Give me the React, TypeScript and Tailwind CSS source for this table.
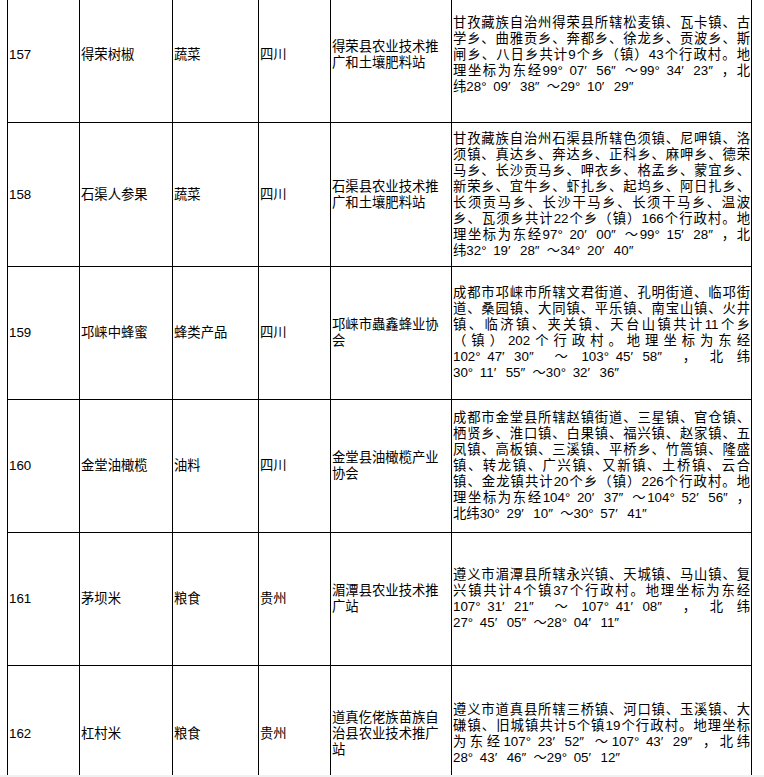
type Row = {
  no: string
  name: string
  kind: string
  prov: string
  org: string[]
  desc: string[]
  h: string
}

const ROWS: Row[] = [
  {
    no: '157', name: '得荣树椒', kind: '蔬菜', prov: '四川', h: 'h-[135px]',
    org: ['得荣县农业技术推', '广和土壤肥料站'],
    desc: [
      '甘孜藏族自治州得荣县所辖松麦镇、瓦卡镇、古',
      '学乡、曲雅贡乡、奔都乡、徐龙乡、贡波乡、斯',
      '闸乡、八日乡共计9个乡（镇）43个行政村。地',
      '理坐标为东经99°07′56″～99°34′23″，北',
      '纬28°09′38″～29°10′29″',
    ],
  },
  {
    no: '158', name: '石渠人参果', kind: '蔬菜', prov: '四川', h: 'h-[144px]',
    org: ['石渠县农业技术推', '广和土壤肥料站'],
    desc: [
      '甘孜藏族自治州石渠县所辖色须镇、尼呷镇、洛',
      '须镇、真达乡、奔达乡、正科乡、麻呷乡、德荣',
      '马乡、长沙贡马乡、呷衣乡、格孟乡、蒙宜乡、',
      '新荣乡、宜牛乡、虾扎乡、起坞乡、阿日扎乡、',
      '长须贡马乡、长沙干马乡、长须干马乡、温波',
      '乡、瓦须乡共计22个乡（镇）166个行政村。地',
      '理坐标为东经97°20′00″～99°15′28″，北',
      '纬32°19′28″～34°20′40″',
    ],
  },
  {
    no: '159', name: '邛崃中蜂蜜', kind: '蜂类产品', prov: '四川', h: 'h-[133px]',
    org: ['邛崃市蟲鑫蜂业协', '会'],
    desc: [
      '成都市邛崃市所辖文君街道、孔明街道、临邛街',
      '道、桑园镇、大同镇、平乐镇、南宝山镇、火井',
      '镇、临济镇、夹关镇、天台山镇共计11个乡',
      '（镇）202个行政村。地理坐标为东经',
      '102°47′30″～103°45′58″，北纬',
      '30°11′55″～30°32′36″',
    ],
  },
  {
    no: '160', name: '金堂油橄榄', kind: '油料', prov: '四川', h: 'h-[133px]',
    org: ['金堂县油橄榄产业', '协会'],
    desc: [
      '成都市金堂县所辖赵镇街道、三星镇、官仓镇、',
      '栖贤乡、淮口镇、白果镇、福兴镇、赵家镇、五',
      '凤镇、高板镇、三溪镇、平桥乡、竹篙镇、隆盛',
      '镇、转龙镇、广兴镇、又新镇、土桥镇、云合',
      '镇、金龙镇共计20个乡（镇）226个行政村。地',
      '理坐标为东经104°20′37″～104°52′56″，',
      '北纬30°29′10″～30°57′41″',
    ],
  },
  {
    no: '161', name: '茅坝米', kind: '粮食', prov: '贵州', h: 'h-[133px]',
    org: ['湄潭县农业技术推', '广站'],
    desc: [
      '遵义市湄潭县所辖永兴镇、天城镇、马山镇、复',
      '兴镇共计4个镇37个行政村。地理坐标为东经',
      '107°31′21″～107°41′08″，北纬',
      '27°45′05″～28°04′11″',
    ],
  },
  {
    no: '162', name: '杠村米', kind: '粮食', prov: '贵州', h: 'h-[136px]',
    org: ['道真仡佬族苗族自', '治县农业技术推广', '站'],
    desc: [
      '遵义市道真县所辖三桥镇、河口镇、玉溪镇、大',
      '磏镇、旧城镇共计5个镇19个行政村。地理坐标',
      '为东经107°23′52″～107°43′29″，北纬',
      '28°43′46″～29°05′12″',
    ],
  },
]

// degree / minute / second marks sit in a full-width slot, like SimSun draws them
function Line({ text, last }: { text: string; last: boolean }) {
  const parts = text.split(/([°′″])/)
  return (
    <div className={last ? 'text-left whitespace-nowrap' : 'text-justify [text-align-last:justify] whitespace-nowrap'}>
      {parts.map((p, i) =>
        /^[°′″]$/.test(p) ? (
          <span key={i} className="inline-block w-[12px]">{p}</span>
        ) : (
          p
        ),
      )}
    </div>
  )
}

function Cell({ w, children }: { w: string; children: React.ReactNode }) {
  return (
    <div className={`${w} flex shrink-0 items-center border-r border-black px-[1px]`}>
      <div className="w-full">{children}</div>
    </div>
  )
}

export default function App() {
  return (
    <div className="flex h-[777px] w-[764px] flex-col overflow-hidden bg-white text-[13.33px] leading-[16px] text-black font-['Liberation_Sans','Noto_Sans_CJK_SC',sans-serif]">
      <div className="h-[775px] overflow-hidden pl-[7px]">
        <div className="-mt-[12px] w-[745px] border-l border-black">
          {ROWS.map((r) => (
            <div key={r.no} className={`${r.h} flex border-b border-black`}>
              <Cell w="w-[72px]">{r.no}</Cell>
              <Cell w="w-[93px]">{r.name}</Cell>
              <Cell w="w-[86px]">{r.kind}</Cell>
              <Cell w="w-[72px]">{r.prov}</Cell>
              <Cell w="w-[121px]">
                {r.org.map((o) => (
                  <div key={o}>{o}</div>
                ))}
              </Cell>
              <Cell w="w-[300px]">
                {r.desc.map((d, i) => (
                  <Line key={i} text={d} last={i === r.desc.length - 1} />
                ))}
              </Cell>
            </div>
          ))}
        </div>
      </div>
      <div className="h-[2px] bg-[#f0f0f0]" />
    </div>
  )
}
